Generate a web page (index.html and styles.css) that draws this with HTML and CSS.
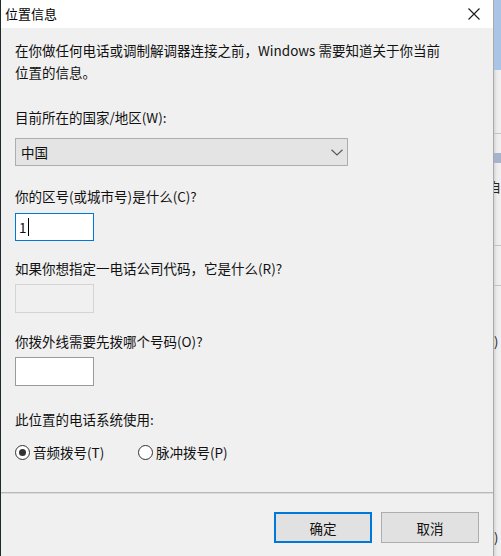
FILE: index.html
```html
<!DOCTYPE html>
<html lang="zh-CN">
<head>
<meta charset="utf-8">
<title>位置信息</title>
<link rel="stylesheet" href="styles.css">
</head>
<body>
<div class="screen">
  <div class="dialog">
    <div class="titlebar">
      <span class="title">位置信息</span>
      <span class="close"><svg width="12" height="12" viewBox="0 0 12 12"><path d="M0.5 0.5L11.5 11.5M11.5 0.5L0.5 11.5" stroke="#1a1a1a" stroke-width="1.1" fill="none"/></svg></span>
    </div>
    <div class="content">
      <p class="intro">在你做任何电话或调制解调器连接之前，Windows 需要知道关于你当前<br>位置的信息。</p>
      <div class="label l-country">目前所在的国家/地区(W):</div>
      <div class="combo"><span>中国</span><svg width="12" height="7" viewBox="0 0 12 7"><path d="M0.5 0.8L6 6L11.5 0.8" stroke="#5a5a5a" stroke-width="1.2" fill="none"/></svg></div>
      <div class="label l-area">你的区号(或城市号)是什么(C)?</div>
      <div class="field focused"><span class="val">1</span><span class="caret"></span></div>
      <div class="label l-carrier">如果你想指定一电话公司代码，它是什么(R)?</div>
      <div class="field disabled"></div>
      <div class="label l-outside">你拨外线需要先拨哪个号码(O)?</div>
      <div class="field plain"></div>
      <div class="label l-system">此位置的电话系统使用:</div>
      <div class="radios">
        <div class="radio"><span class="dot checked"></span><span>音频拨号(T)</span></div>
        <div class="radio"><span class="dot"></span><span>脉冲拨号(P)</span></div>
      </div>
    </div>
    <div class="footer">
      <button class="btn default">确定</button>
      <button class="btn">取消</button>
    </div>
  </div>
  <div class="behind">
    <div class="b-blue"></div>
    <div class="b-line b-l1"></div>
    <div class="b-bar"></div>
    <div class="b-char">自</div>
    <div class="b-line b-l2"></div>
    <div class="b-line b-l3"></div>
    <div class="b-char b-paren1">)</div>
    <div class="b-char b-paren2">)</div>
  </div>
</div>
</body>
</html>
```

FILE: styles.css
```css
html, body {
  margin: 0;
  padding: 0;
  width: 501px;
  height: 556px;
  overflow: hidden;
  background: #e9e9e9;
}

.screen {
  display: flex;
  width: 501px;
  height: 556px;
  font-family: "Noto Sans CJK SC", "Noto Sans", sans-serif;
  color: #111;
}

.dialog {
  width: 494px;
  height: 556px;
  box-sizing: border-box;
  border-left: 1px solid #1f2a2c;
  border-right: 1px solid #a9a9a9;
  background: #f0f0f0;
  display: flex;
  flex-direction: column;
}

.titlebar {
  height: 28px;
  background: #ffffff;
  display: flex;
  align-items: center;
  justify-content: space-between;
  padding: 0 13px 0 4px;
  flex: none;
}

.title {
  font-size: 13px;
  line-height: 28px;
  color: #000;
}

.close {
  display: flex;
  align-items: center;
  margin-top: 0px;
}

.content {
  flex: 1;
  padding: 0 0 0 14px;
  font-size: 13.5px;
  line-height: 22px;
}

.intro {
  margin: 11px 0 0 0;
  line-height: 22px;
}

.label {
  line-height: 22px;
  height: 22px;
  white-space: nowrap;
}

.l-country { margin-top: 23px; }
.l-area { margin-top: 19px; }
.l-carrier { margin-top: 16px; }
.l-outside { margin-top: 17px; }
.l-system { margin-top: 22px; }

.combo {
  margin-top: 10px;
  width: 333px;
  height: 28px;
  box-sizing: border-box;
  background: #e4e4e4;
  border: 1px solid #adadad;
  display: flex;
  align-items: center;
  justify-content: space-between;
  padding: 0 4px 0 5px;
}

.combo span {
  line-height: 20px;
}

.field {
  width: 79px;
  height: 29px;
  box-sizing: border-box;
  background: #fff;
  border: 1px solid #9a9a9a;
  display: flex;
  align-items: center;
  padding-left: 3px;
}

.field.focused {
  margin-top: 6px;
  height: 28px;
  border-color: #0078d7;
}

.field.disabled {
  margin-top: 5px;
  background: #f0f0f0;
  border-color: #d4d4d4;
}

.field.plain {
  margin-top: 5px;
}

.val {
  line-height: 20px;
}

.caret {
  width: 1px;
  height: 18px;
  background: #000;
  margin-left: 1px;
}

.radios {
  margin-top: 11px;
  display: grid;
  grid-template-columns: 123px auto;
  height: 22px;
  align-items: center;
}

.radio {
  display: flex;
  align-items: center;
  gap: 3px;
  line-height: 22px;
  white-space: nowrap;
}

.dot {
  width: 15px;
  height: 15px;
  box-sizing: border-box;
  border: 1px solid #333;
  border-radius: 50%;
  background: #fff;
  display: flex;
  align-items: center;
  justify-content: center;
  flex: none;
}

.dot.checked::after {
  content: "";
  width: 7px;
  height: 7px;
  border-radius: 50%;
  background: #333;
}

.footer {
  flex: none;
  height: 64px;
  box-sizing: border-box;
  border-top: 1px solid #b9b9b9;
  box-shadow: inset 0 1px 0 #dcdcdc;
  display: flex;
  justify-content: flex-end;
  align-items: flex-start;
  gap: 9px;
  padding: 19px 14px 0 0;
}

.btn {
  width: 98px;
  height: 31px;
  box-sizing: border-box;
  background: #e1e1e1;
  border: 1px solid #adadad;
  font-family: "Noto Sans CJK SC", "Noto Sans", sans-serif;
  font-size: 13.5px;
  color: #111;
  padding: 0;
  margin: 0;
}

.btn.default {
  border: 2px solid #0078d7;
}

.behind {
  flex: 1;
  background: linear-gradient(to right, #d6d6d6, #ececec 3px, #f0f0f0);
  display: flex;
  flex-direction: column;
  font-family: "Noto Sans CJK SC", sans-serif;
  font-size: 13px;
  color: #222;
  overflow: hidden;
}

.b-blue {
  height: 70px;
  background: #a9c4e4;
  flex: none;
}

.b-line {
  height: 1px;
  background: #c4c4c4;
  flex: none;
}

.b-l1 { margin-top: 63px; }

.b-bar {
  margin-top: 19px;
  height: 10px;
  background: #a7b3cc;
  flex: none;
}

.b-char {
  line-height: 14px;
  height: 14px;
  flex: none;
  white-space: nowrap;
}

.b-char:not(.b-paren1):not(.b-paren2) {
  margin-top: 17px;
  margin-left: -6px;
}

.b-l2 { margin-top: 51px; }
.b-l3 { margin-top: 39px; }

.b-paren1 { margin-top: 49px; }
.b-paren2 { margin-top: 182px; }
```
